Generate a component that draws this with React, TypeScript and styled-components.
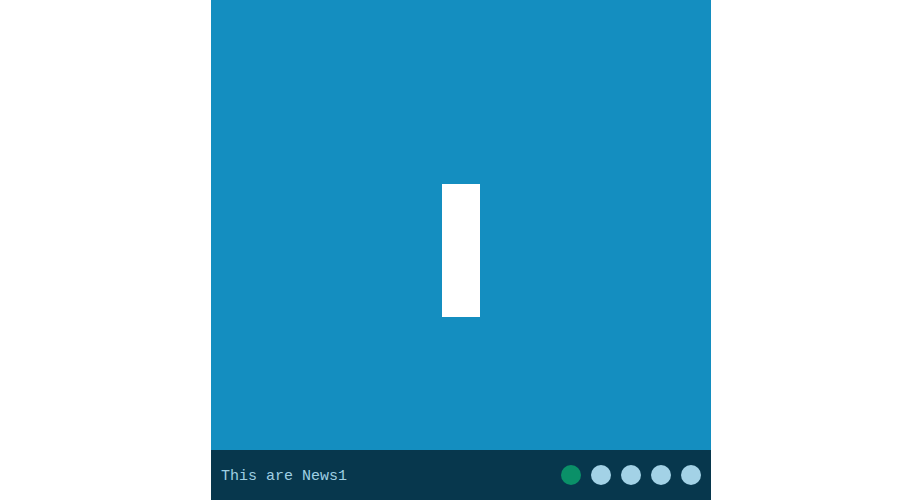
import React from "react";
import styled, { createGlobalStyle } from "styled-components";

const Global = createGlobalStyle`
  html, body { margin: 0; padding: 0; background: #ffffff; }
  body { font-family: "Liberation Mono", monospace; }
`;

const Page = styled.div`
  display: flex;
  justify-content: center;
  width: 899px;
  padding-left: 23px;
  box-sizing: border-box;
`;

const Slider = styled.div`
  width: 500px;
  height: 500px;
  display: flex;
  flex-direction: column;
`;

const Slide = styled.div`
  flex: 1;
  background: #148ec0;
  display: flex;
  align-items: center;
  justify-content: center;
`;

const Numeral = styled.div`
  width: 38px;
  height: 133px;
  background: #ffffff;
  margin-top: 51px;
`;

const Footer = styled.div`
  height: 50px;
  background: #07374d;
  display: flex;
  align-items: center;
  justify-content: space-between;
  padding: 0 10px;
`;

const Caption = styled.span`
  font-family: "Liberation Mono", "DejaVu Sans Mono", monospace;
  font-size: 15px;
  color: #9fcfe3;
  padding-top: 2px;
`;

const Dots = styled.div`
  display: flex;
  gap: 10px;
`;

const Dot = styled.span<{ $active?: boolean }>`
  width: 20px;
  height: 20px;
  border-radius: 50%;
  background: ${(p) => (p.$active ? "#0a9068" : "#a3d2e6")};
`;

export default function App() {
  return (
    <>
      <Global />
      <Page>
        <Slider>
          <Slide>
            <Numeral />
          </Slide>
          <Footer>
            <Caption>This are News1</Caption>
            <Dots>
              {[0, 1, 2, 3, 4].map((i) => (
                <Dot key={i} $active={i === 0} />
              ))}
            </Dots>
          </Footer>
        </Slider>
      </Page>
    </>
  );
}
